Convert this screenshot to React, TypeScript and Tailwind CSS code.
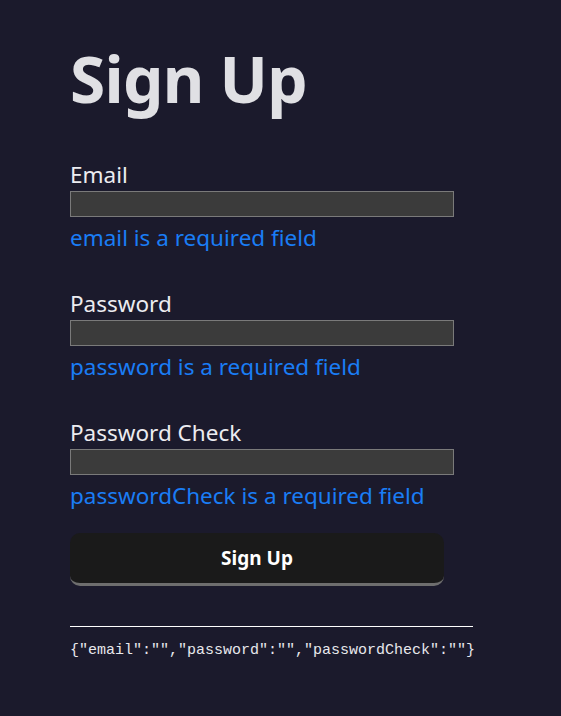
import { useState } from 'react';

const FIELDS = [
  { name: 'email', label: 'Email', type: 'email' },
  { name: 'password', label: 'Password', type: 'password' },
  { name: 'passwordCheck', label: 'Password Check', type: 'password' },
] as const;

type Values = { email: string; password: string; passwordCheck: string };

export default function App() {
  const [values, setValues] = useState<Values>({ email: '', password: '', passwordCheck: '' });

  return (
    <div className="min-h-[716px] bg-[#1b1a2c] font-['Noto_Sans','Open_Sans',sans-serif] text-[#e4e4e8]">
      <div className="w-[403px] pl-[70px] box-content pt-[39px]">
        <h1 className="text-[64px] font-bold leading-[80px] tracking-[-0.7px] text-[#e0e0e4]">Sign Up</h1>

        <form className="mt-[40px] flex flex-col" onSubmit={(e) => e.preventDefault()}>
          {FIELDS.map((f) => (
            <div key={f.name} className="mb-[35px] flex flex-col">
              <label className="text-[22.5px] leading-[32px] text-[#ececf0]">{f.label}</label>
              <input
                type={f.type}
                value={values[f.name]}
                onChange={(e) => setValues({ ...values, [f.name]: e.target.value })}
                className="h-[26px] w-[384px] border border-[#7a7a7a] bg-[#3b3b3b] outline-none"
              />
              {!values[f.name] && (
                <span className="mt-[6px] text-[22.5px] leading-[30px] text-[#1a7df5]">
                  {f.name} is a required field
                </span>
              )}
            </div>
          ))}

          <button
            type="submit"
            className="-mt-[13px] h-[53px] w-[374px] rounded-[10px] border-b-[3px] border-[#6e6e6e] bg-[#1a1a1a] text-[19px] font-bold text-white"
          >
            Sign Up
          </button>
        </form>

        <hr className="mt-[40px] border-t border-white" />
        <pre className="mt-[15px] font-['Liberation_Mono',monospace] text-[15px] leading-[18px] text-[#e8e8ec]">
          {JSON.stringify(values)}
        </pre>
      </div>
    </div>
  );
}
